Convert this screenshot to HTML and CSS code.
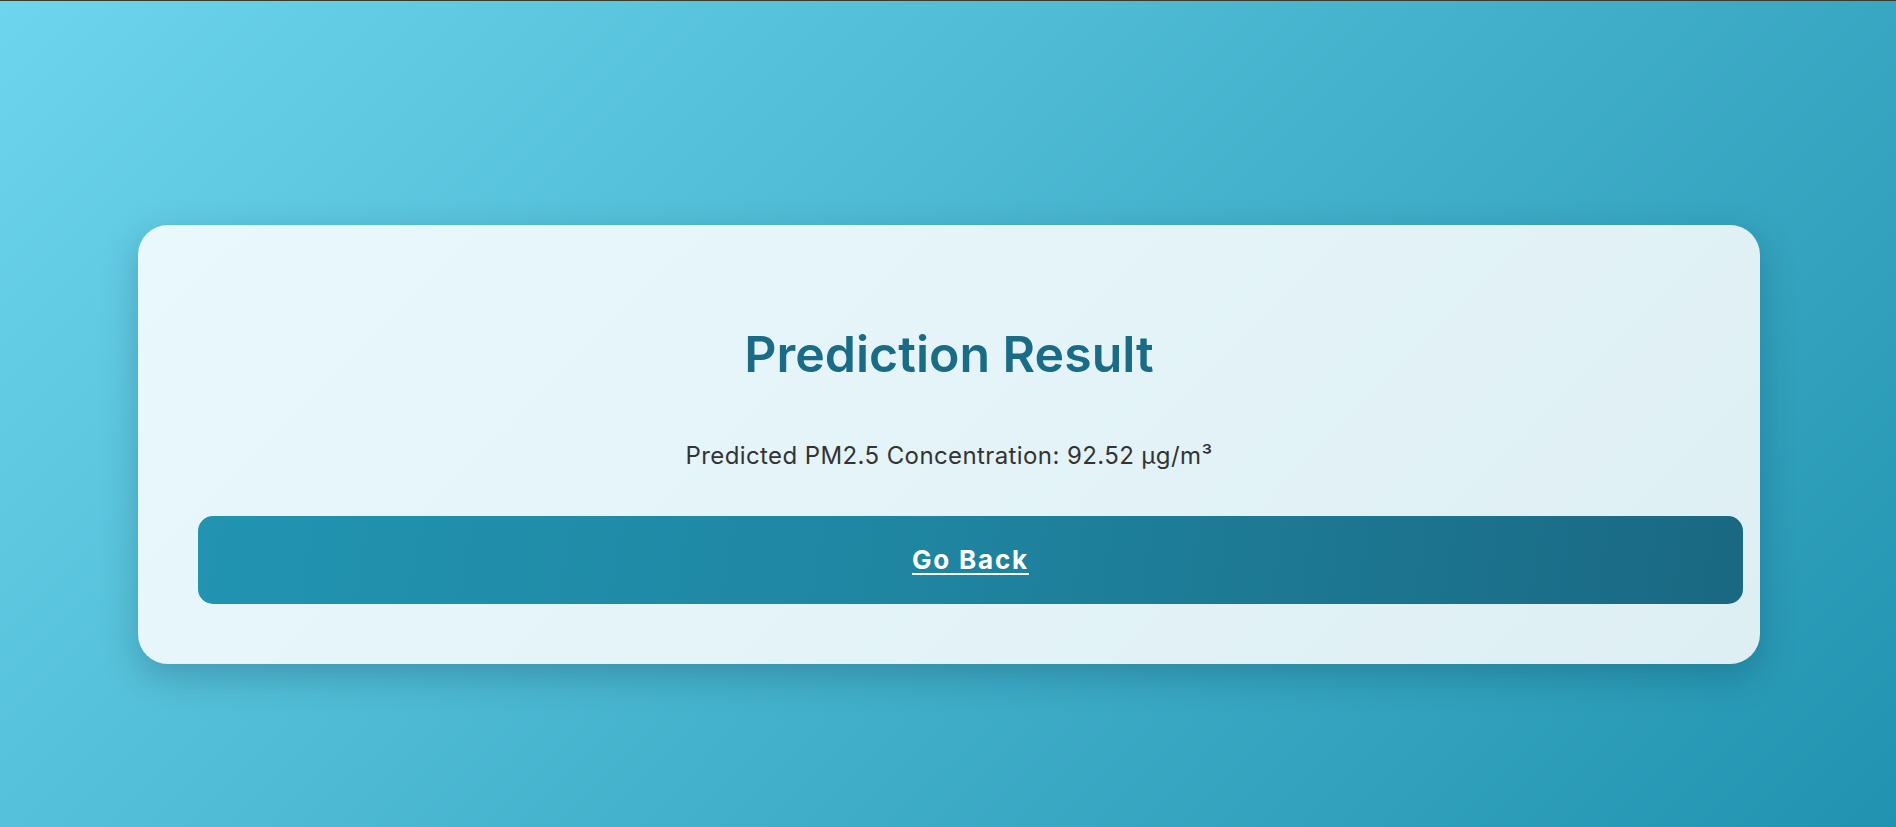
FILE: index.html
```html
<!DOCTYPE html>
<html lang="en">
<head>
<meta charset="utf-8">
<title>Prediction Result</title>
<link rel="stylesheet" href="styles.css">
</head>
<body>
<main class="page">
  <section class="card">
    <h1 class="title">Prediction Result</h1>
    <p class="result">Predicted PM2.5 Concentration: 92.52 µg/m³</p>
    <a class="back" href="#">Go Back</a>
  </section>
</main>
</body>
</html>
```

FILE: styles.css
```css
html, body {
  margin: 0;
  padding: 0;
  height: 100%;
}
body {
  font-family: Inter, "Open Sans", sans-serif;
  background: linear-gradient(135deg, #6dd5ed 0%, #2193b0 100%);
  border-top: 1px solid #3a3d2c;
  box-sizing: border-box;
  overflow: hidden;
}
.page {
  padding-top: 224px;
  padding-left: 2px;
  display: flex;
  justify-content: center;
}
.card {
  width: 1502px;
  padding: 60px;
  border-radius: 30px;
  background: linear-gradient(135deg, #e9f8fd 0%, #deeff4 100%);
  box-shadow: 0 12px 36px rgba(0, 40, 60, 0.25);
  text-align: center;
}
.title {
  margin: 39px 0 0;
  font-size: 50px;
  font-weight: 600;
  line-height: 1.2;
  color: #1a6b85;
}
.result {
  margin: 55px 0 0;
  font-size: 24px;
  letter-spacing: 0.4px;
  line-height: 1.4;
  color: #333;
}
.back {
  display: block;
  box-sizing: content-box;
  width: 100%;
  margin-top: 43px;
  padding: 0 21.5px;
  height: 88px;
  line-height: 88px;
  border-radius: 15px;
  background: linear-gradient(100deg, #2194b1 0%, #1f86a2 45%, #1a6882 100%);
  color: #fff;
  font-size: 26px;
  font-weight: 700;
  letter-spacing: 1.8px;
  text-decoration: underline;
  text-underline-offset: 4px;
  text-decoration-thickness: 2px;
}
```
